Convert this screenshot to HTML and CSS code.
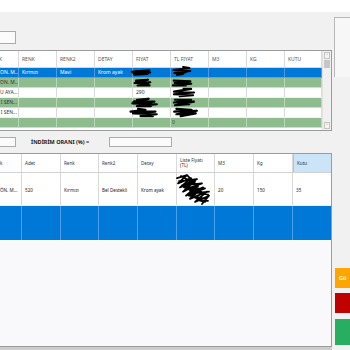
FILE: index.html
```html
<!DOCTYPE html>
<html lang="tr">
<head>
<meta charset="utf-8">
<title>Sipariş</title>
<link rel="stylesheet" href="styles.css">
</head>
<body>
<div class="app">
  <div class="titlebar"></div>
  <div class="main">
    <div class="content">
      <div class="toprow"><div class="textbox tb-top"></div></div>

      <div class="grid1">
        <div class="g1-rows">
          <div class="g1-row g1-head">
            <div class="c first-h">K</div><div class="c">RENK</div><div class="c">RENK2</div><div class="c">DETAY</div><div class="c">FIYAT</div><div class="c">TL FIYAT</div><div class="c">M3</div><div class="c">KG</div><div class="c">KUTU</div>
          </div>
          <div class="g1-row sel">
            <div class="c first">ON. M...</div><div class="c">Kırmızı</div><div class="c">Mavi</div><div class="c">Krom ayak</div>
            <div class="c"><svg class="scrib s1" viewBox="0 0 24 10" preserveAspectRatio="none"><path d="M1,4 L22,2 L3,6 L23,5 L4,8 L20,7 M6,3 L18,4"/></svg></div>
            <div class="c"><svg class="scrib s2" viewBox="0 0 24 10" preserveAspectRatio="none"><path d="M14,1 L22,2 L2,4 L23,5 L3,7 L18,6 L6,9 L14,8"/></svg></div>
            <div class="c"></div><div class="c"></div><div class="c"></div>
          </div>
          <div class="g1-row green">
            <div class="c first">ON. M...</div><div class="c"></div><div class="c"></div><div class="c"></div>
            <div class="c"><svg class="scrib s3" viewBox="0 0 24 10" preserveAspectRatio="none"><path d="M4,2 L20,1 L2,5 L23,4 L6,8 L22,8 M8,5 L20,6"/></svg></div>
            <div class="c"><svg class="scrib s4" viewBox="0 0 24 10" preserveAspectRatio="none"><path d="M2,2 L21,3 L3,5 L22,6 L1,8 L16,8"/></svg></div>
            <div class="c"></div><div class="c"></div><div class="c"></div>
          </div>
          <div class="g1-row white">
            <div class="c first">U AYA...</div><div class="c"></div><div class="c"></div><div class="c"></div>
            <div class="c">290</div>
            <div class="c"><svg class="scrib s5" viewBox="0 0 24 10" preserveAspectRatio="none"><path d="M12,1 L20,1 L2,4 L23,5 L2,7 L22,8 L8,9"/></svg></div>
            <div class="c"></div><div class="c"></div><div class="c"></div>
          </div>
          <div class="g1-row green">
            <div class="c first">I SEN...</div><div class="c"></div><div class="c"></div><div class="c"></div>
            <div class="c"><svg class="scrib s6" viewBox="0 0 24 10" preserveAspectRatio="none"><path d="M6,2 L16,1 L3,4 L21,4 L2,6 L23,7 L6,9 L18,9 M8,5 L18,5"/></svg></div>
            <div class="c"><svg class="scrib s7" viewBox="0 0 24 10" preserveAspectRatio="none"><path d="M3,2 L20,2 L2,5 L23,4 L3,8 L18,7"/></svg></div>
            <div class="c"></div><div class="c"></div><div class="c"></div>
          </div>
          <div class="g1-row white">
            <div class="c first">I SEN...</div><div class="c"></div><div class="c"></div><div class="c"></div>
            <div class="c"><svg class="scrib s8" viewBox="0 0 24 10" preserveAspectRatio="none"><path d="M8,1 L14,2 L2,4 L22,4 L4,6 L23,7 L10,9 L20,9"/></svg></div>
            <div class="c"><svg class="scrib s9" viewBox="0 0 24 10" preserveAspectRatio="none"><path d="M4,1 L18,2 L2,4 L23,3 L4,7 L22,6 L8,9"/></svg></div>
            <div class="c"></div><div class="c"></div><div class="c"></div>
          </div>
          <div class="g1-row green">
            <div class="c first"></div><div class="c"></div><div class="c"></div><div class="c"></div><div class="c"></div>
            <div class="c dark">0</div>
            <div class="c"></div><div class="c"></div><div class="c"></div>
          </div>
        </div>
        <div class="vscroll">
          <div class="sb-arrow">&#708;</div>
          <div class="sb-thumb"></div>
          <div class="sb-track"></div>
          <div class="sb-arrow">&#709;</div>
        </div>
      </div>

      <div class="discount-row">
        <div class="textbox tb-small"></div>
        <span class="disc-label">İNDİRİM ORANI (%) =</span>
        <div class="textbox tb-disc"></div>
      </div>

      <div class="grid2">
        <div class="g2-row g2-head">
          <div class="d">k</div><div class="d">Adet</div><div class="d">Renk</div><div class="d">Renk2</div><div class="d">Detay</div><div class="d two">Liste Fiyatı<br>(TL)</div><div class="d">M3</div><div class="d">Kg</div><div class="d active">Kutu</div>
        </div>
        <div class="g2-row g2-data">
          <div class="d first">ÖN. M...</div><div class="d">520</div><div class="d">Kırmızı</div><div class="d">Bel Destekli</div><div class="d">Krom ayak</div>
          <div class="d"><svg class="scrib big" viewBox="0 0 36 30" preserveAspectRatio="none"><path d="M2,4 L12,1 L3,9 L16,4 L5,13 L20,7 L8,17 L24,10 L11,21 L28,13 L15,24 L32,17 L20,27 L34,21 L27,29 M6,2 L19,9 L9,13 L26,17 L14,21 L31,24 M13,2 L23,12 L15,16 L33,20 M4,7 L22,5 L7,11 L27,9 L10,15 L30,14 L16,19 L34,17 M18,22 L30,27 L22,25 L33,26"/></svg></div>
          <div class="d">20</div><div class="d">150</div><div class="d">35</div>
        </div>
        <div class="g2-row g2-sel">
          <div class="d"></div><div class="d"></div><div class="d"></div><div class="d"></div><div class="d"></div><div class="d"></div><div class="d"></div><div class="d"></div><div class="d"></div>
        </div>
      </div>
      <div class="bottom-strip"></div>
    </div>

    <div class="side">
      <div class="side-panel"></div>
      <div class="btn btn-orange">Gü</div>
      <div class="btn btn-red"></div>
      <div class="btn btn-green"></div>
    </div>
  </div>
</div>
</body>
</html>
```

FILE: styles.css
```css
* { box-sizing: border-box; margin: 0; padding: 0; }
html, body { width: 350px; height: 350px; overflow: hidden; }
body {
  font-family: "Noto Sans", "Open Sans", "DejaVu Sans", sans-serif;
  background: #f1f1f1;
  color: #222;
}
.app { display: flex; flex-direction: column; height: 350px; }
.titlebar { height: 12px; background: #ffffff; flex: none; }
.main { flex: 1; display: flex; background: #f1f1f1; overflow: hidden; }
.content { width: 332px; flex: none; display: flex; flex-direction: column; overflow: hidden; }

.toprow { height: 38px; padding-top: 19px; flex: none; }
.textbox { background: #fbfbfb; border: 1px solid #ababab; flex: none; }
.tb-top { width: 36px; height: 13px; margin-left: -20px; }

/* upper grid */
.grid1 {
  height: 81px; flex: none; display: flex;
  border: 1px solid #9c9c9c; border-left: none;
  background: #ffffff;
}
.g1-rows { width: 322px; flex: none; }
.g1-row {
  display: grid;
  grid-template-columns: 19px repeat(7, 38px) 37px;
  height: 10px;
  border-bottom: 1px solid #eef2ee;
}
.g1-row .c {
  position: relative;
  border-right: 1px solid #dadada;
  padding-left: 3px;
  font-size: 5px;
  line-height: 9px;
  white-space: nowrap;
  overflow: visible;
  color: #333;
}
.g1-row .c.first { overflow: hidden; padding-left: 0; padding-right: 1px; text-align: right; }
.g1-head { height: 17px; border-bottom: 1px solid #d6d6d6; }
.g1-head .c { line-height: 16px; color: #555; font-size: 5px; }
.g1-head .c.first-h { padding-left: 0; text-indent: -1px; overflow: hidden; }
.g1-row.sel { background: #0078d7; border-bottom-color: #5aa3e0; }
.g1-row.sel .c { color: #fff; border-right-color: #4b9be0; }
.g1-row.green { background: #8fbc8f; border-bottom-color: #c9ddc9; }
.g1-row.green .c { border-right-color: #bcd6bc; }
.g1-row.white { background: #fff; }
.g1-row .c.dark { color: #2f4f2f; padding-left: 1px; }

.scrib { position: absolute; z-index: 2; overflow: visible; }
.scrib path {
  fill: none; stroke: #000; stroke-width: 2.1;
  stroke-linejoin: round; stroke-linecap: round;
  vector-effect: non-scaling-stroke;
}
.s1 { left: -2px; top: 1px; width: 20px; height: 7px; }
.s2 { left: 1px; top: -2px; width: 19px; height: 10px; }
.s3 { left: 0; top: 1px; width: 18px; height: 8px; }
.s4 { left: 1px; top: 1px; width: 21px; height: 8px; }
.s5 { left: 1px; top: 0; width: 23px; height: 9px; }
.s6 { left: -3px; top: 0; width: 28px; height: 9px; }
.s7 { left: 1px; top: 0; width: 23px; height: 9px; }
.s8 { left: -5px; top: 0; width: 30px; height: 9px; }
.s9 { left: 1px; top: 0; width: 26px; height: 9px; }
.big { left: -2px; top: 1px; width: 36px; height: 31px; }
.big path { stroke-width: 1.8; }

.vscroll {
  width: 9px; flex: none; display: flex; flex-direction: column;
  background: #f0f0f0; border-left: 1px solid #e2e2e2; padding: 1px 1px;
}
.sb-arrow {
  height: 7px; flex: none; font-size: 5px; line-height: 7px; text-align: center;
  color: #777; border: 1px solid #c4c4c4; background: #f4f4f4;
}
.sb-thumb { height: 8px; flex: none; background: #c6c6c6; margin-top: 1px; }
.sb-track { flex: 1; }

/* discount row */
.discount-row { display: flex; align-items: center; height: 10px; margin-top: 6px; flex: none; }
.tb-small { width: 36px; height: 10px; margin-left: -20px; }
.disc-label { margin-left: 15px; width: 65px; font-size: 5.5px; font-weight: 700; color: #222; white-space: nowrap; }
.tb-disc { margin-left: 13px; width: 63px; height: 10px; }

/* lower grid */
.grid2 {
  margin-top: 6px; height: 194px; flex: none;
  border: 1px solid #9c9c9c; border-left: none;
  background: #f9f9fb;
  display: flex; flex-direction: column;
}
.g2-row {
  display: grid;
  grid-template-columns: 22px 39px 38px 39px 39px 38px 39px 39px 38px;
  flex: none;
}
.g2-row .d {
  position: relative;
  border-right: 1px solid #d9d9d9;
  padding-left: 3px;
  font-size: 4.6px;
  white-space: nowrap;
  color: #222;
}
.g2-row .d:last-child { border-right: none; }
.g2-head { height: 19px; background: #fff; border-bottom: 1px solid #d2d2d2; }
.g2-head .d { display: flex; align-items: center; color: #333; }
.g2-head .d:first-child { padding-left: 0; }
.g2-head .d.two { line-height: 5px; align-items: center; padding-top: 0; }
.g2-head .d.active { background: #cce4f7; border-left: 1px solid #99c9ef; }
.g2-data { height: 33px; background: #fff; border-bottom: 1px solid #eeeeee; }
.g2-data .d { display: flex; align-items: center; padding-top: 2px; }
.g2-data .d.first { padding-left: 0; overflow: hidden; }
.g2-sel { height: 34px; background: #0078d7; margin-top: 0; }
.g2-sel .d { border-right-color: #4aa0ea; }

.bottom-strip { height: 4px; background: #cdcdcd; flex: none; }

/* side */
.side { flex: 1; display: flex; flex-direction: column; }
.side-panel {
  margin: 5px 0 0 2px; height: 60px; flex: none;
  border-top: 1px solid #b8b8b8; border-left: 1px solid #b8b8b8;
  background: #f7f7f7;
}
.btn {
  margin-left: 3px; flex: none; color: #fff; font-size: 5.5px; font-weight: 600;
  padding-left: 4px; white-space: nowrap; overflow: hidden;
  display: flex; align-items: center;
}
.btn-orange { margin-top: 191px; height: 20px; background: #ffa500; }
.btn-red { margin-top: 5px; height: 20px; background: #c00000; }
.btn-green { margin-top: 6px; height: 26px; background: #27ae60; }
```
